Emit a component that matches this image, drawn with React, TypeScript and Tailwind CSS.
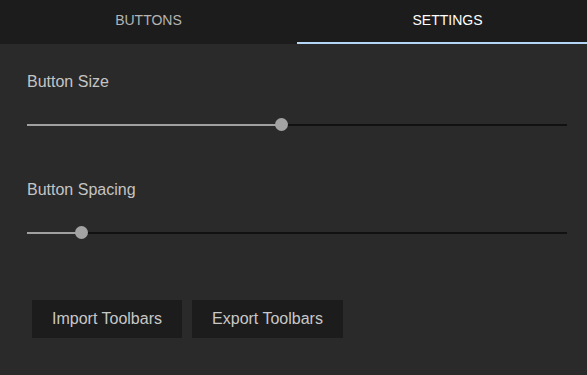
import React from "react";

function Slider({ pct }: { pct: number }) {
  return (
    <div className="relative h-[12px] w-[540px]">
      <div className="absolute left-0 right-0 top-[5px] h-[2px] bg-[#111111]" />
      <div className="absolute left-0 top-[5px] h-[2px] bg-[#a0a0a0]" style={{ width: `${pct}px` }} />
      <div
        className="absolute top-[-1px] h-[13px] w-[13px] rounded-full bg-[#a3a3a3]"
        style={{ left: `${pct - 6.5}px` }}
      />
    </div>
  );
}

export default function App() {
  return (
    <div
      className="w-[587px] h-[375px] bg-[#2a2a2a] flex flex-col"
      style={{ fontFamily: '"Liberation Sans", Arial, sans-serif' }}
    >
      <div className="flex h-[44px] bg-[#1c1c1c]">
        <div className="w-[297px] flex items-center justify-center text-[14px] text-[#b4b4b4] pb-[4px]">
          BUTTONS
        </div>
        <div className="flex-1 flex items-center justify-center text-[14px] text-white border-b-2 border-[#b6d6f8] pl-[11px] pb-[2px]">
          SETTINGS
        </div>
      </div>
      <div className="flex flex-col pl-[27px] pt-[28px]">
        <div className="text-[16px] leading-[20px] text-[#c4c4c4]">Button Size</div>
        <div className="mt-[27px]">
          <Slider pct={254} />
        </div>
        <div className="mt-[49px] text-[16px] leading-[20px] text-[#c4c4c4]">Button Spacing</div>
        <div className="mt-[27px]">
          <Slider pct={54} />
        </div>
        <div className="mt-[61px] ml-[5px] flex gap-[10px]">
          <button className="w-[150px] h-[38px] bg-[#1c1c1c] text-[16px] text-[#c8c8c8]">Import Toolbars</button>
          <button className="w-[151px] h-[38px] bg-[#1c1c1c] text-[16px] text-[#c8c8c8]">Export Toolbars</button>
        </div>
      </div>
    </div>
  );
}
